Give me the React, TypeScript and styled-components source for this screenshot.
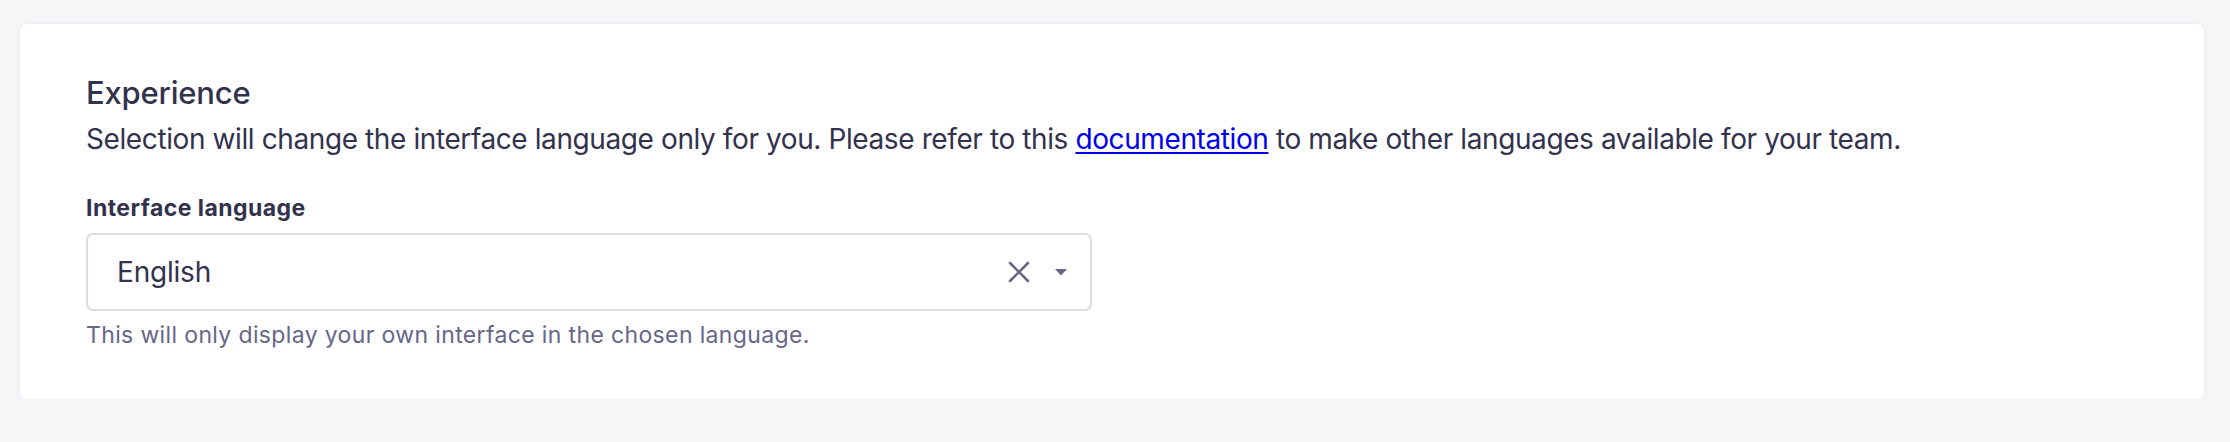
import React from "react";
import styled, { createGlobalStyle } from "styled-components";

const GlobalStyle = createGlobalStyle`
  html, body {
    margin: 0;
    padding: 0;
    background: #f6f6f9;
  }
  body {
    font-family: Inter, "Noto Sans", "Liberation Sans", sans-serif;
    color: #32324d;
  }
  * { box-sizing: border-box; }
`;

const Page = styled.main`
  padding: 24px 26px 0 20px;
`;

const Card = styled.section`
  background: #ffffff;
  border-radius: 7px;
  box-shadow: 0 1px 6px rgba(33, 33, 52, 0.08);
  padding: 49px 66px 49px 66px;
  display: flex;
  flex-direction: column;
`;

const Title = styled.h2`
  margin: 0;
  font-size: 31px;
  line-height: 40px;
  font-weight: 500;
  letter-spacing: -0.2px;
  color: #32324d;
`;

const Description = styled.p`
  margin: 8px 0 0 0;
  font-size: 28px;
  line-height: 36px;
  font-weight: 400;
  letter-spacing: -0.4px;
  color: #32324d;
`;

const DocLink = styled.a`
  color: #0000ee;
  text-decoration: underline;
  text-underline-offset: 3px;
  text-decoration-thickness: 2px;
`;

const Field = styled.div`
  margin-top: 37px;
  display: flex;
  flex-direction: column;
`;

const Label = styled.label`
  font-size: 23px;
  line-height: 28px;
  font-weight: 700;
  letter-spacing: 0.45px;
  color: #32324d;
`;

const SelectBox = styled.div`
  margin-top: 11px;
  width: 1006px;
  height: 78px;
  border: 2px solid #dcdce4;
  border-radius: 7px;
  background: #ffffff;
  display: flex;
  align-items: center;
  padding: 0 22px 0 29px;
`;

const Value = styled.span`
  flex: 1;
  font-size: 28px;
  line-height: 36px;
  letter-spacing: -0.2px;
  color: #32324d;
`;

const Actions = styled.div`
  display: flex;
  align-items: center;
  gap: 24px;
`;

const IconButton = styled.button`
  border: 0;
  background: transparent;
  padding: 0;
  margin: 0;
  display: flex;
  align-items: center;
  justify-content: center;
  cursor: pointer;
  color: #666687;
`;

const Hint = styled.p`
  margin: 9px 0 0 0;
  font-size: 23px;
  line-height: 30px;
  letter-spacing: 0.36px;
  color: #666687;
`;

export default function App() {
  return (
    <>
      <GlobalStyle />
      <Page>
        <Card>
          <Title>Experience</Title>
          <Description>
            Selection will change the interface language only for you. Please refer to this{" "}
            <DocLink href="#">documentation</DocLink> to make other languages available for your team.
          </Description>
          <Field>
            <Label>Interface language</Label>
            <SelectBox>
              <Value>English</Value>
              <Actions>
                <IconButton aria-label="Clear">
                  <svg width="22" height="22" viewBox="0 0 22 22" fill="none">
                    <path d="M2 2 L20 20 M20 2 L2 20" stroke="#666687" strokeWidth="2.6" strokeLinecap="round" />
                  </svg>
                </IconButton>
                <IconButton aria-label="Open">
                  <svg width="14" height="8" viewBox="0 0 14 8">
                    <path d="M1 1 H13 L7 7.5 Z" fill="#666687" />
                  </svg>
                </IconButton>
              </Actions>
            </SelectBox>
            <Hint>This will only display your own interface in the chosen language.</Hint>
          </Field>
        </Card>
      </Page>
    </>
  );
}
